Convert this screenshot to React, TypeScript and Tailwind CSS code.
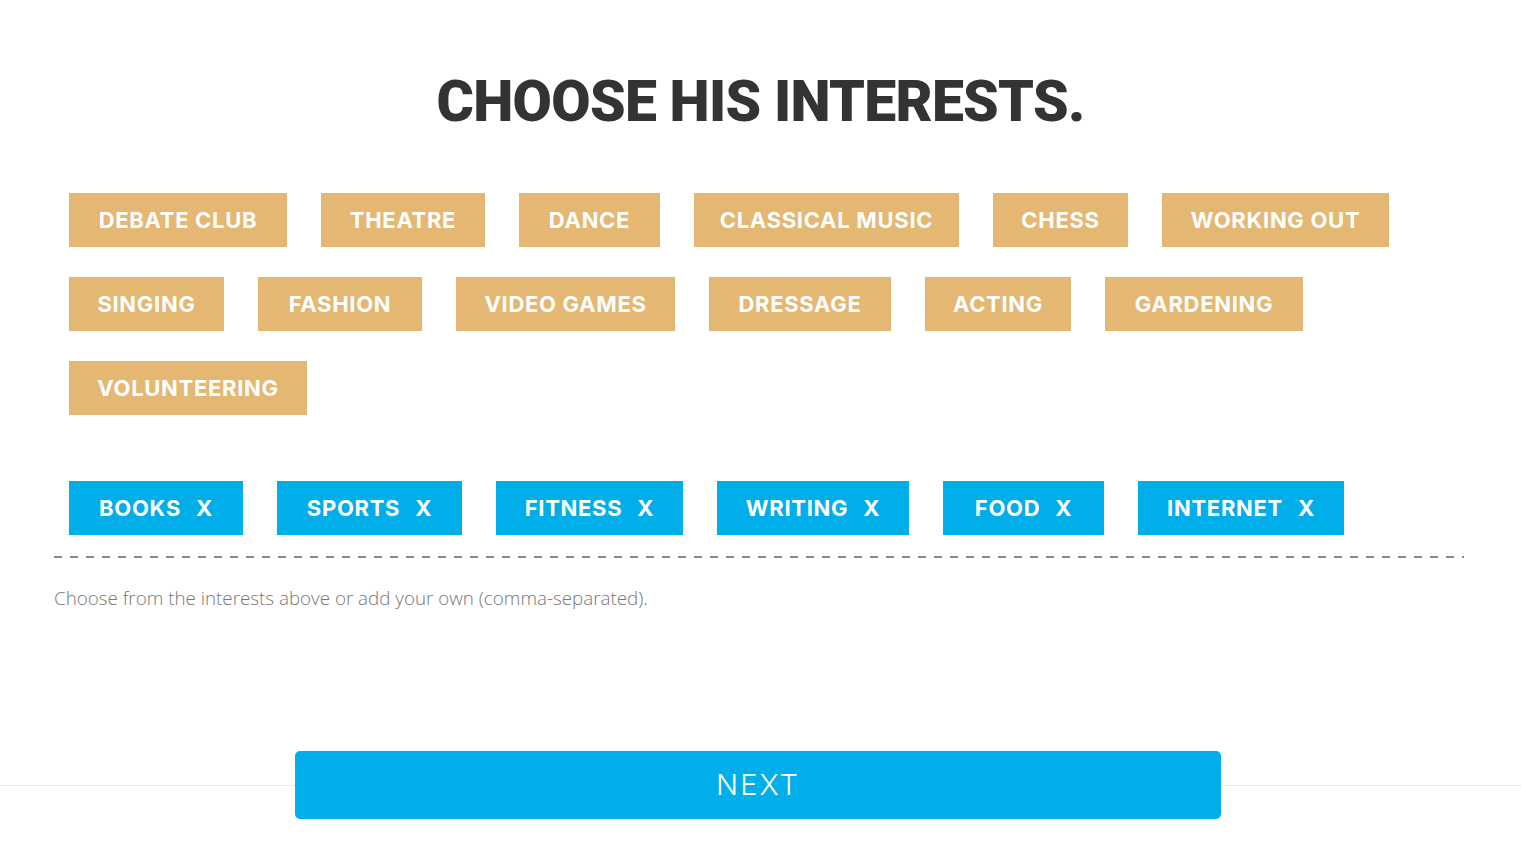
import React from "react";

const tan: [string, string][] = [
  ["DEBATE CLUB", "w-[218px]"],
  ["THEATRE", "w-[164px]"],
  ["DANCE", "w-[141px]"],
  ["CLASSICAL MUSIC", "w-[265px]"],
  ["CHESS", "w-[135px]"],
  ["WORKING OUT", "w-[227px]"],
  ["SINGING", "w-[155px]"],
  ["FASHION", "w-[164px]"],
  ["VIDEO GAMES", "w-[219px]"],
  ["DRESSAGE", "w-[182px]"],
  ["ACTING", "w-[146px]"],
  ["GARDENING", "w-[198px]"],
  ["VOLUNTEERING", "w-[238px]"],
];

const blue: [string, string][] = [
  ["BOOKS", "w-[174px]"],
  ["SPORTS", "w-[185px]"],
  ["FITNESS", "w-[187px]"],
  ["WRITING", "w-[192px]"],
  ["FOOD", "w-[161px]"],
  ["INTERNET", "w-[206px]"],
];

export default function App() {
  return (
    <div className="min-h-[841px] bg-white font-['Inter',sans-serif]">
      <h1 className="pt-[72px] text-center font-['Roboto',sans-serif] text-[57px] leading-[60px] font-black tracking-[-0.7px] text-[#333333]">
        CHOOSE HIS INTERESTS.
      </h1>
      <div className="mx-[54px] mt-[61px]">
        <div className="flex max-w-[1360px] flex-wrap gap-x-[34px] gap-y-[30px] pl-[15px]">
          {tan.map(([t, w]) => (
            <div
              key={t}
              className={`${w} flex h-[54px] items-center justify-center bg-[#e4b873] text-[22px] font-bold tracking-[0.7px] text-white`}
            >
              {t}
            </div>
          ))}
        </div>
        <div className="mt-[66px] flex flex-wrap gap-x-[34px] pl-[15px]">
          {blue.map(([t, w]) => (
            <div
              key={t}
              className={`${w} flex h-[54px] items-center justify-center gap-[15px] bg-[#00aeea] text-[22px] font-bold tracking-[0.7px] text-white`}
            >
              <span>{t}</span>
              <span>X</span>
            </div>
          ))}
        </div>
        <div className="mt-[21px] h-[2px] w-[1410px] bg-[repeating-linear-gradient(to_right,#8a8a8a_0_8px,transparent_8px_16px)]" />
        <p className="mt-[27px] font-['Open_Sans',sans-serif] text-[18.8px] font-light leading-[26px] text-[#777777]">
          Choose from the interests above or add your own (comma-separated).
        </p>
      </div>
      <div className="relative mt-[140px] h-[68px]">
        <div className="absolute left-0 right-0 top-[34px] h-px bg-[#ebebeb]" />
        <div className="relative ml-[295px] flex h-[68px] w-[926px] items-center justify-center rounded-[5px] bg-[#00aeea] text-[29px] font-light tracking-[2px] text-white">
          NEXT
        </div>
      </div>
    </div>
  );
}
